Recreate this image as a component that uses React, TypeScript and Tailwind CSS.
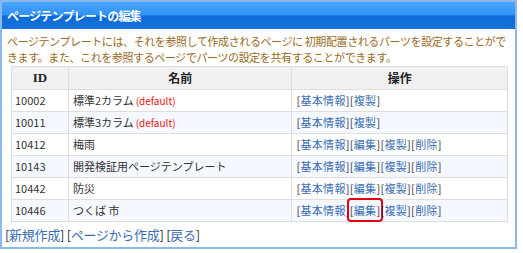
import React from 'react';

type Row = {
    id: string;
    name: string;
    isDefault?: boolean;
    actions: string[];
    highlight?: string;
};

const rows: Row[] = [
    { id: '10002', name: '標準2カラム', isDefault: true, actions: ['基本情報', '複製'] },
    { id: '10011', name: '標準3カラム', isDefault: true, actions: ['基本情報', '複製'] },
    { id: '10412', name: '梅雨', actions: ['基本情報', '編集', '複製', '削除'] },
    { id: '10143', name: '開発検証用ページテンプレート', actions: ['基本情報', '編集', '複製', '削除'] },
    { id: '10442', name: '防災', actions: ['基本情報', '編集', '複製', '削除'] },
    { id: '10446', name: 'つくば 市', actions: ['基本情報', '編集', '複製', '削除'], highlight: '編集' },
];

function BracketLink({ label, boxed }: { label: string; boxed?: boolean }) {
    return (
        <span className="relative">
            <span className="text-[#333]">[</span>
            <a href="#" className="text-[#3a6db5]">{label}</a>
            <span className="text-[#333]">]</span>
            {boxed && (
                <span className="absolute -left-[3px] -right-[3px] -top-[4px] -bottom-[4px] rounded-[4px] border-2 border-[#e60012]" />
            )}
        </span>
    );
}

export default function App() {
    return (
        <div className="w-[523px] h-[253px] bg-white font-['Noto_Sans_CJK_JP',sans-serif]">
            <div className="w-[517px] h-[249px] border-2 border-[#8db8ec] flex flex-col">
                {/* Header */}
                <div className="h-[27px] flex items-center pl-[5px] bg-[linear-gradient(to_bottom,#4ba5ff_0%,#2f92f6_48%,#0b6ad8_52%,#1673dc_100%)]">
                    <h1 className="text-[12px] font-bold text-white tracking-[-0.8px]">ページテンプレートの編集</h1>
                </div>

                <div className="pl-[5px] pr-[2px]">
                    {/* Description */}
                    <p className="mt-[4px] text-[11px] leading-[16px] tracking-[-0.4px] text-[#9a6a1c]">
                        ページテンプレートには、それを参照して作成されるページに 初期配置されるパーツを設定することができます。また、これを参照するページでパーツの設定を共有することができます。
                    </p>

                    {/* Table */}
                    <table className="ml-[4px] mt-[1px] w-[497px] border-collapse text-[11px] text-[#333]">
                        <thead>
                            <tr className="bg-[#f1f1f1]">
                                <th className="w-[57px] h-[23px] border border-[#dedede] font-bold text-[13px] text-[#222] font-['Liberation_Serif',serif]">ID</th>
                                <th className="w-[224px] h-[23px] border border-[#dedede] font-bold text-[12px] text-[#222]">名前</th>
                                <th className="w-[216px] h-[23px] border border-[#dedede] font-bold text-[12px] text-[#222]">操作</th>
                            </tr>
                        </thead>
                        <tbody>
                            {rows.map((row, i) => (
                                <tr key={row.id} className={i % 2 === 1 ? 'bg-[#f5f9ff]' : 'bg-white'}>
                                    <td className="h-[22px] border border-[#dedede] pl-[3px]">{row.id}</td>
                                    <td className="h-[22px] border border-[#dedede] pl-[4px]">
                                        {row.name}
                                        {row.isDefault && (
                                            <span className="ml-[2px] text-[10px] text-[#ee1111]">(default)</span>
                                        )}
                                    </td>
                                    <td className="h-[22px] border border-[#dedede] pl-[4px] tracking-[0.3px]">
                                        {row.actions.map((a) => (
                                            <BracketLink key={a} label={a} boxed={row.highlight === a} />
                                        ))}
                                    </td>
                                </tr>
                            ))}
                        </tbody>
                    </table>

                    {/* Footer links */}
                    <div className="mt-[4px] -ml-[2px] text-[13px] leading-[18px] tracking-[-0.3px]">
                        <BracketLink label="新規作成" /> <BracketLink label="ページから作成" /> <BracketLink label="戻る" />
                    </div>
                </div>
            </div>
        </div>
    );
}
